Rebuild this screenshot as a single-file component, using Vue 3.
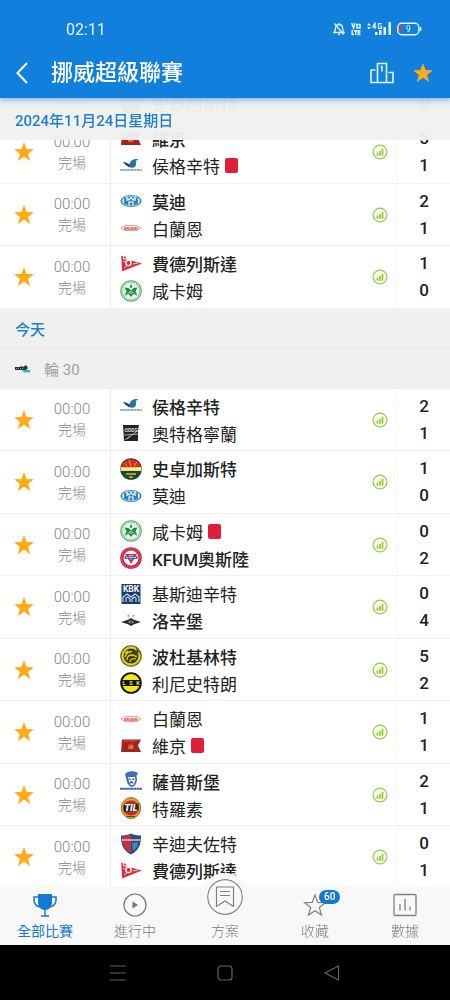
<template>
  <div class="app">
    <svg class="sprite" aria-hidden="true">
      <symbol id="star" viewBox="0 0 24 24"><path d="M12 1.200l2.800 7.600 8 .3-6.300 5 2.200 7.700L12 17.300l-6.700 4.500 2.200-7.700-6.300-5 8-.3z" fill="#ffab17"/></symbol>
      <symbol id="stat" viewBox="0 0 16 16"><circle cx="8" cy="8" r="6.900" fill="#f8fdec" stroke="#9bc653" stroke-width="1.200"/><path d="M5.500 8.500v3.300M8 7v4.800M10.500 4.800v7" stroke="#93cb2e" stroke-width="1.700"/></symbol>
      <symbol id="haugesund" viewBox="0 0 22 22">
        <path d="M3 7c3 .3 4.500 1.300 6.500 2.500C10.500 5 13.500 3.500 19 4c-3 1-3.500 2.500-3 5 .3 3-3 4.500-5.500 3.500C8 11.500 6 10 3 7z" fill="#2274ac"/>
        <path d="M3 7c3 .3 5 1.800 7 2.600l-1 2.400C6 11 5.500 9 3 7z" fill="#24445f"/>
        <path d="M0 15h22" stroke="#6b9cb9" stroke-width="1.300" stroke-dasharray="3 .4"/>
      </symbol>
      <symbol id="odd" viewBox="0 0 22 22">
        <path d="M3 3h16l-1 5v11H4z" fill="#222"/>
        <text x="11" y="10" font-size="5" font-weight="700" font-family="Roboto" text-anchor="middle" fill="#ddd">ODDS</text>
        <path d="M4 13l14-1M7 17l14-11M5 18l5-4" stroke="#ccc" stroke-width=".8"/>
      </symbol>
      <symbol id="stromsgodset" viewBox="0 0 22 22">
        <circle cx="11" cy="11" r="10.800" fill="#154b35"/>
        <path d="M1 9a10.300 10.300 0 0 1 20 0z" fill="#d92925"/>
        <path d="M.5 9h21v4H.5z" fill="#f5d85c"/>
        <path d="M4 5l3 3M9 2l2 6M17 4l-3 4" stroke="#f0a13a" stroke-width="1"/>
        <path d="M2 11h18" stroke="#fff5bd" stroke-width="2" stroke-dasharray="2 .7"/>
        <path d="M6 16h10M9 19h4" stroke="#e0b83b" stroke-width="1.500"/>
      </symbol>
      <symbol id="molde" viewBox="0 0 22 22">
        <ellipse cx="11" cy="11" rx="10.600" ry="6" fill="#287fbb"/>
        <ellipse cx="11" cy="11" rx="9" ry="4.800" fill="none" stroke="#9ed4ef" stroke-width="1"/>
        <path d="M7 11V7.500l2 2.500 2-2.500 2 2.500 2-2.500V11M9 11.500V15M9 12h4M13 11.500V15M3.500 9v4M18.500 9v4" fill="none" stroke="#fff" stroke-width="1.200"/>
      </symbol>
      <symbol id="brann" viewBox="0 0 22 22">
        <path d="M1 11l4-2.500h12l4 2.500-4 2.500H5z" fill="#fff4f1" stroke="#e68c80" stroke-width=".8"/>
        <text x="11" y="12.600" font-size="4" font-weight="700" font-family="Roboto" text-anchor="middle" fill="#d93b30">BRANN</text>
      </symbol>
      <symbol id="fredrikstad" viewBox="0 0 22 22">
        <path d="M2 6l7 1 13 3.500L3 18z" fill="#d82c3c"/>
        <path d="M2 3l1 15M4 4l2 1" stroke="#d82c3c" stroke-width="1.600"/>
        <circle cx="8.500" cy="10" r="3.300" fill="#fff"/><circle cx="8.500" cy="10" r="2" fill="#d82c3c"/>
        <path d="M13 11l5-1M3 8l2 1M4 15l3-2" stroke="#fbdde0" stroke-width="1"/>
      </symbol>
      <symbol id="hamkam" viewBox="0 0 22 22">
        <circle cx="11" cy="11" r="10.300" fill="#e7f7e9" stroke="#3b9d54" stroke-width="1"/>
        <circle cx="11" cy="11" r="8.700" fill="none" stroke="#74bd83" stroke-width="1.300" stroke-dasharray="1.200 .8"/>
        <path d="M11 4l1.300 2.500-1.300 2-1.300-2zM4.500 7.500l4 .5 2.500 2.500L13.500 8l4-.5-2 4 2 4-4-1.500-2.500 3-2.500-3-4 1.500 2-4z" fill="#278b42"/>
        <path d="M11 11v3M8 13.500l2-2M14 13.500l-2-2" stroke="#e7f7e9" stroke-width=".9"/>
      </symbol>
      <symbol id="kfum" viewBox="0 0 22 22">
        <circle cx="11" cy="11" r="10.800" fill="#cc213c"/>
        <circle cx="11" cy="11" r="9.300" fill="none" stroke="#ed8f9e" stroke-width=".8" stroke-dasharray="1.500 1"/>
        <circle cx="11" cy="11" r="7.500" fill="#fff"/>
        <path d="M5 7h12l-6 10z" fill="#d2314b"/>
        <path d="M8.500 8.500h5L11 13z" fill="#fff"/>
        <path d="M4.500 9.200h13v2.700h-13z" fill="#35569b"/>
        <path d="M6 10.500h10" stroke="#d8e3f4" stroke-width="1" stroke-dasharray="2 .7"/>
      </symbol>
      <symbol id="kristiansund" viewBox="0 0 22 22">
        <path d="M1.500 1h19v20h-19z" fill="#193e69"/>
        <text x="11" y="9" font-size="8.500" font-weight="700" font-family="Roboto" text-anchor="middle" fill="#fff">KBK</text>
        <path d="M3 19v-5l4-3 4 3 4-3 4 3v5M6 19v-4l2-1 2 2v3M12 19v-3l2-2 2 1v4" fill="none" stroke="#c7e0f5" stroke-width="1.100"/>
      </symbol>
      <symbol id="rosenborg" viewBox="0 0 22 22">
        <path d="M1 12l7-2.300 3-1.700 3 1.700 7 2.300-7 2.300-3 1.700-3-1.700z" fill="#2b2b2b"/>
        <path d="M8 12l3-2 3 2-3 2z" fill="#9b9b91"/><path d="M11 9v6" stroke="#222" stroke-width="1"/>
        <path d="M7.500 5.500h2M12.500 5.500h2M8.500 7h1M12.500 7h1" stroke="#e38b69" stroke-width="1.400"/>
      </symbol>
      <symbol id="bodo" viewBox="0 0 22 22">
        <circle cx="11" cy="11" r="10.200" fill="#e3d11c" stroke="#5c5715" stroke-width="1.100"/>
        <circle cx="11" cy="11" r="7.500" fill="#403d14"/>
        <path d="M5 12c1-4 4-6 7-5M7 15c0-3 2-5 5-5s3 2 5 1M10 17c0-3 3-4 6-3M5 8l3-2" fill="none" stroke="#e3d11c" stroke-width="1.300"/>
        <path d="M16 3l4 5-3-1z" fill="#222"/>
      </symbol>
      <symbol id="lsk" viewBox="0 0 22 22">
        <circle cx="11" cy="11" r="9.900" fill="#f7e51c" stroke="#151515" stroke-width="1.800"/>
        <path d="M1 8h20v6H1z" fill="#151515"/>
        <text x="4" y="13" font-size="5.500" font-weight="700" font-family="Roboto" text-anchor="middle" fill="#f7e51c">L</text>
        <text x="11" y="13" font-size="5.500" font-weight="700" font-family="Roboto" text-anchor="middle" fill="#f7e51c">S</text>
        <text x="18" y="13" font-size="5.500" font-weight="700" font-family="Roboto" text-anchor="middle" fill="#f7e51c">K</text>
      </symbol>
      <symbol id="viking" viewBox="0 0 22 22">
        <path d="M2 4.500h19l-3 6 3 6.500H1z" fill="#a32420"/>
        <path d="M4 6h12" stroke="#d57a5e" stroke-width="1" stroke-dasharray="1.500 .8"/>
        <path d="M8 14l1-5 1.500 2 1-3 1.500 3 1-1-1 4z" fill="#e66d3a"/>
      </symbol>
      <symbol id="sarpsborg" viewBox="0 0 22 22">
        <path d="M5 4c2-3 9-4 13-1l-1.500 3 .5 4c-.5 4-3 7-5 7s-5-3-5.500-7z" fill="#4769bd"/>
        <path d="M8 7h7l.5 3-2 5h-3l-2-5z" fill="#edf2fb"/>
        <path d="M8.500 8.700l2.200 1M14.500 8.700l-2.200 1M10 13.500l1.500-2 1.500 2" stroke="#3051a4" stroke-width="1.100" fill="none"/>
        <path d="M0 18.800h22" stroke="#4460ad" stroke-width="2" stroke-dasharray="3 .3"/>
      </symbol>
      <symbol id="tromso" viewBox="0 0 22 22">
        <ellipse cx="11" cy="11" rx="9.700" ry="10.600" fill="#d5a22b" stroke="#8d5c28" stroke-width=".8"/>
        <ellipse cx="11" cy="11" rx="8" ry="7.500" fill="#c42a2c"/>
        <path d="M3.500 8l15-1.500v7L4 15z" fill="#2d2422"/>
        <text x="11" y="14" font-size="9" font-weight="900" font-style="italic" font-family="Roboto" text-anchor="middle" fill="#fff">TIL</text>
        <path d="M7 19.500h8" stroke="#405032" stroke-width="1"/>
      </symbol>
      <symbol id="sandefjord" viewBox="0 0 22 22">
        <path d="M1 2.500C5 2.500 8 2 11 .5c3 1.500 6 2 10 2 0 9-2 15-10 19C3 17.500 1 11.500 1 2.500z" fill="#244b86"/>
        <path d="M2 3.500c4 0 6-.5 9-2V20C4 16.500 2 11 2 3.500z" fill="#c83042"/>
        <path d="M2 7h18" stroke="#eab7bf" stroke-width="2" stroke-dasharray="1.500 .4"/>
        <path d="M12 10l6-1c0 4-2 7-5 9z" fill="#4386be"/>
      </symbol>
    </svg>

    <header class="header">
      <div class="status-bar">
        <span class="clock">02:11</span>
        <div class="status-icons">
          <svg width="12" height="14" viewBox="0 0 12 14" fill="none" stroke="#e5f5ff" stroke-width="1.300"><path d="M1 10.500h10c-1.200-1-1.500-2-1.500-4.500S8.300 2.500 6 2.500 2.500 4 2.500 6 2 9.500 1 10.500zM5 12.500h2M6 1v1.500M1.500 1.500l9 11"/></svg>
          <svg width="10" height="14" viewBox="0 0 10 14" fill="none" stroke="#e5f5ff" stroke-width="1.500"><path d="M.7 1l1.800 5L4.200 1M6 2.500h3V6H6zM1.200 8v4.500H3M3 8.700h3.400M4.700 8.700V13M9.500 8.700H7.300v3.800h2.200M7.300 10.600h2"/></svg>
          <svg width="24" height="14" viewBox="0 0 24 14"><path d="M0 3.500L2 1l2 2.500zM0 5l2 2.500L4 5zM8 10h2.500v3H8zM12 8h2.500v5H12zM16.500 5H19v8h-2.500zM21.500 0H24v13h-2.500z" fill="#e5f5ff"/><path d="M8 7V1L5.700 5H9.300M14.500 1.600h-3v4.800h3V4h-1.300" fill="none" stroke="#e5f5ff" stroke-width="1.200"/></svg>
          <svg width="25" height="14" viewBox="0 0 25 14"><rect x=".8" y="1.300" width="21" height="11.400" rx="4" fill="none" stroke="#e5f5ff" stroke-width="1.400"/><path d="M2 4.500c.4-1 1.200-1.700 2.500-1.800v8.600C3 11.200 2 10.300 2 9z" fill="#dd3557"/><path d="M23.500 5v4" stroke="#e5f5ff" stroke-width="1.600"/><text x="11.500" y="10" font-size="8.500" font-family="Roboto" text-anchor="middle" fill="#e5f5ff">9</text></svg>
        </div>
      </div>
      <div class="title-bar">
        <button class="icon-btn" aria-label="返回"><svg width="12" height="22" viewBox="0 0 12 22" fill="none" stroke="#fff" stroke-width="2"><path d="M11 1L1.500 11 11 21"/></svg></button>
        <h1 class="title">挪威超級聯賽</h1>
        <button class="icon-btn" aria-label="積分榜"><svg width="24" height="22" viewBox="0 0 24 22" fill="none" stroke="#e5f5ff" stroke-width="1.600"><path d="M7.500 20.500V1.500h9v19M5.500 8H1v12.500h22V10.500h-4.500M10.500 4.500H12v5"/></svg></button>
        <button class="icon-btn" aria-label="收藏聯賽"><svg width="22" height="22"><use href="#star"/></svg></button>
      </div>
    </header>

    <main class="list">
      <h2 class="date date-sticky">2024年11月24日星期日</h2>
      <template v-for="(group, g) in groups" :key="g">
        <template v-if="group.date">
          <h2 class="date">{{ group.date }}</h2>
          <div class="round">
            <svg width="16" height="10" viewBox="0 0 16 10"><path d="M0 3h5l1-1 2 1 3-2 2 3-2 2H0z" fill="#263746"/><path d="M1 4.500h8" stroke="#aab8c0" stroke-width=".8" stroke-dasharray="1 1"/><path d="M7 6h8v2.500H9z" fill="#38add3"/></svg>
            <span>{{ group.round }}</span>
          </div>
        </template>
        <div class="group" :class="{ scrolled: !group.date }">
          <div v-for="(m, i) in group.matches" :key="i" class="match">
            <button class="fav" aria-label="收藏"><svg width="22" height="22"><use href="#star"/></svg></button>
            <div class="when">
              <span class="time">00:00</span>
              <span class="state">完場</span>
            </div>
            <div class="teams">
              <div v-for="t in m" :key="t.logo" class="team" :class="{ winner: t.win }">
                <svg width="22" height="22"><use :href="'#' + t.logo"/></svg>
                <span>{{ t.name }}</span>
                <i v-if="t.red" class="red-card"></i>
              </div>
            </div>
            <button class="stat" aria-label="統計"><svg width="16" height="16"><use href="#stat"/></svg></button>
            <div class="score">
              <span v-for="t in m" :key="t.logo">{{ t.goals }}</span>
            </div>
          </div>
        </div>
      </template>
    </main>

    <nav class="tabs">
      <a href="#" class="tab active">
        <svg width="24" height="24" viewBox="0 0 24 24"><path d="M5 1h14v8c0 5-3 8-7 8s-7-3-7-8z" fill="#1479d0"/><path d="M5 4H1v3c0 4 2 6 6 7M19 4h4v3c0 4-2 6-6 7M12 17v6M8 23h8" fill="none" stroke="#1479d0" stroke-width="1.500"/></svg>
        <span>全部比賽</span>
      </a>
      <a href="#" class="tab">
        <svg width="24" height="24" viewBox="0 0 24 24"><circle cx="12" cy="12" r="11" fill="none" stroke="#777" stroke-width="1.200"/><path d="M9.500 8.500l5.500 3.500-5.500 3.500z" fill="#777"/></svg>
        <span>進行中</span>
      </a>
      <a href="#" class="tab tab-plan">
        <svg class="plan-icon" width="36" height="36" viewBox="0 0 36 36" fill="none" stroke="#808080" stroke-width="1.200"><circle cx="18" cy="18" r="17.300"/><path d="M9.500 8h17v19.500L18 22l-8.500 5.500zM13 12.500h10M13 16.500h10"/></svg>
        <span>方案</span>
      </a>
      <a href="#" class="tab">
        <svg width="24" height="24" viewBox="0 0 24 24" fill="none" stroke="#808080" stroke-width="1.200"><path d="M12 2l2.700 7.400 7.800.3-6.200 4.800 2.200 7.600L12 17.700l-6.500 4.400 2.200-7.600-6.200-4.800 7.800-.3z"/></svg>
        <b class="badge">60</b>
        <span>收藏</span>
      </a>
      <a href="#" class="tab">
        <svg width="24" height="24" viewBox="0 0 24 24" fill="none" stroke="#808080" stroke-width="1.300"><rect x="1" y="1.500" width="22" height="21" rx="1"/><path d="M7 11v6.500M12 6v11.500M17 13.500v4"/></svg>
        <span>數據</span>
      </a>
    </nav>

    <div class="system-bar">
      <button aria-label="選單"><svg width="16" height="16" viewBox="0 0 16 16" stroke="#626262" stroke-width="1.200"><path d="M0 1h16M0 8h16M0 15h16"/></svg></button>
      <button aria-label="主畫面"><svg width="16" height="16" viewBox="0 0 16 16" fill="none" stroke="#626262" stroke-width="1.200"><rect x="1" y="1" width="14" height="14" rx="3"/></svg></button>
      <button aria-label="上一頁"><svg width="16" height="16" viewBox="0 0 16 16" fill="none" stroke="#626262" stroke-width="1.200"><path d="M14.500 1v14L1 8z" stroke-linejoin="round"/></svg></button>
    </div>
  </div>
</template>

<script setup>
const team = (logo, name, goals, opts = {}) => ({ logo, name, goals, ...opts })
const win = { win: true }
const red = { red: true }

const groups = [
  {
    matches: [
      [team('rosenborg', '洛辛堡', 1, win), team('stromsgodset', '史卓加斯特', 0)],
      [team('viking', '維京', 5, win), team('haugesund', '侯格辛特', 1, red)],
      [team('molde', '莫迪', 2, win), team('brann', '白蘭恩', 1)],
      [team('fredrikstad', '費德列斯達', 1, win), team('hamkam', '咸卡姆', 0)]
    ]
  },
  {
    date: '今天',
    round: '輪 30',
    matches: [
      [team('haugesund', '侯格辛特', 2, win), team('odd', '奧特格寧蘭', 1)],
      [team('stromsgodset', '史卓加斯特', 1, win), team('molde', '莫迪', 0)],
      [team('hamkam', '咸卡姆', 0, red), team('kfum', 'KFUM奧斯陸', 2, win)],
      [team('kristiansund', '基斯迪辛特', 0), team('rosenborg', '洛辛堡', 4, win)],
      [team('bodo', '波杜基林特', 5, win), team('lsk', '利尼史特朗', 2)],
      [team('brann', '白蘭恩', 1), team('viking', '維京', 1, red)],
      [team('sarpsborg', '薩普斯堡', 2, win), team('tromso', '特羅素', 1)],
      [team('sandefjord', '辛迪夫佐特', 0), team('fredrikstad', '費德列斯達', 1, win)]
    ]
  }
]
</script>

<style>
body { margin: 0; }
</style>

<style scoped>
.app {
  display: flex;
  flex-direction: column;
  height: 100vh;
  background: #fff;
  color: #222;
  font-family: Roboto, "Noto Sans CJK TC", sans-serif;
}
.app * { box-sizing: border-box; }
svg { display: block; flex-shrink: 0; }
.sprite { display: none; }
button {
  display: flex;
  align-items: center;
  justify-content: center;
  padding: 0;
  border: 0;
  background: none;
  cursor: pointer;
}

.header {
  position: relative;
  z-index: 2;
  flex-shrink: 0;
  background: #1080dc;
  box-shadow: 0 1px 6px 1px rgba(16, 128, 220, 0.55);
}
.status-bar {
  display: flex;
  align-items: center;
  justify-content: space-between;
  height: 48px;
  padding: 10px 28px 0 66px;
  color: #e5f5ff;
}
.clock { font-size: 16px; }
.status-icons { display: flex; align-items: center; gap: 6px; }
.title-bar {
  display: flex;
  align-items: center;
  height: 50px;
  padding: 0 16px;
  gap: 18px;
}
.title {
  flex: 1;
  margin: 0 0 0 5px;
  font-size: 22px;
  font-weight: 500;
  line-height: 30px;
  color: #fff;
}

.list {
  flex: 1;
  min-height: 0;
  overflow-y: auto;
  scrollbar-width: none;
}
.date {
  display: flex;
  align-items: center;
  height: 40px;
  margin: 0;
  padding: 0 15px;
  font-size: 15px;
  font-weight: 500;
  color: #2080cc;
  background: #f0f0f0;
}
.date-sticky {
  position: sticky;
  top: 0;
  z-index: 1;
  height: 42px;
  background: rgba(240, 240, 240, 0.96);
}
.round {
  display: flex;
  align-items: center;
  gap: 13px;
  height: 40px;
  padding: 0 15px;
  border-top: 1px solid #e9e9e9;
  font-size: 15px;
  color: #a0a0a0;
  background: #f0f0f0;
}
.scrolled { margin-top: -82px; }

.match {
  display: grid;
  grid-template-columns: 48px 63px 1fr 34px 53px;
  height: 62px;
  border-top: 1px solid #efefef;
}
.match:nth-child(even) { height: 63px; }
.when,
.teams,
.score {
  display: flex;
  flex-direction: column;
  justify-content: center;
}
.when {
  align-items: center;
  padding-right: 14px;
  border-right: 1px solid #ececec;
  line-height: 21px;
  color: #858585;
}
.time { padding-top: 1px; font-size: 15px; font-weight: 300; }
.state { font-size: 14px; font-weight: 300; }
.teams { padding-left: 9px; }
.team {
  display: flex;
  align-items: center;
  height: 27px;
  gap: 10px;
  font-size: 17px;
  white-space: nowrap;
}
.winner { font-weight: 500; }
.red-card {
  width: 13px;
  height: 15px;
  margin-left: -5px;
  border-radius: 2px;
  background: #df1f38;
}
.score {
  align-items: center;
  border-left: 1px solid #f4f4f4;
  font-size: 17px;
  font-weight: 500;
  line-height: 27px;
}

.tabs {
  position: relative;
  z-index: 2;
  display: flex;
  flex-shrink: 0;
  height: 58px;
  background: #f8f8f8;
}
.tab {
  position: relative;
  flex: 1;
  display: flex;
  flex-direction: column;
  align-items: center;
  padding-top: 6px;
  gap: 4px;
  font-size: 14px;
  font-weight: 300;
  line-height: 20px;
  color: #7c7c7c;
  text-decoration: none;
}
.active { font-weight: 400; color: #1479d0; }
.tab-plan { padding-top: 34px; }
.plan-icon {
  position: absolute;
  top: -8px;
  border-radius: 50%;
  background: #f8f8f8;
  box-shadow: 0 0 0 6px #f8f8f8;
}
.badge {
  position: absolute;
  top: 3px;
  left: 50%;
  margin-left: 4px;
  padding: 0 5px;
  border-radius: 7px;
  font-size: 10px;
  font-weight: 500;
  line-height: 14px;
  color: #fff;
  background: #1479d0;
}

.system-bar {
  display: flex;
  flex-shrink: 0;
  height: 55px;
  padding: 0 64px;
  background: #000;
}
.system-bar button { flex: 1; }
</style>
